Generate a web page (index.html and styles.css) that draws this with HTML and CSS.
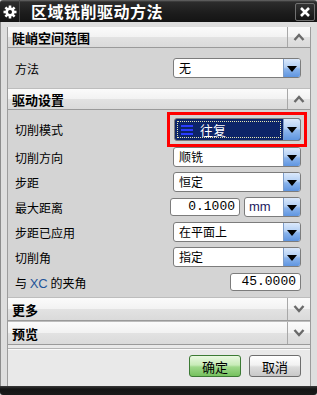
FILE: index.html
```html
<!DOCTYPE html>
<html lang="zh-CN">
<head>
    <meta charset="UTF-8">
    <title>区域铣削驱动方法</title>
    <link rel="stylesheet" href="styles.css">
</head>
<body>
<div class="dialog">
    <div class="titlebar">
        <span class="gear">
            <svg width="14" height="14" viewBox="0 0 14 14">
                <g fill="#fff" transform="translate(7 7)">
                    <rect x="-1.3" y="-6.5" width="2.6" height="13"/>
                    <rect x="-1.3" y="-6.5" width="2.6" height="13" transform="rotate(45)"/>
                    <rect x="-1.3" y="-6.5" width="2.6" height="13" transform="rotate(90)"/>
                    <rect x="-1.3" y="-6.5" width="2.6" height="13" transform="rotate(135)"/>
                    <circle r="4.6"/>
                </g>
                <circle cx="7" cy="7" r="2" fill="#1c1c1c"/>
            </svg>
        </span>
        <span class="title">区域铣削驱动方法</span>
        <span class="close">
            <svg width="12" height="12" viewBox="0 0 12 12">
                <path d="M2 2 L10 10 M10 2 L2 10" stroke="#fff" stroke-width="2.6"/>
            </svg>
        </span>
    </div>

    <div class="frame">
        <div class="panel">
            <div class="section-head first">
                <span class="head-text">陡峭空间范围</span>
                <span class="toggle">
                    <svg width="12" height="8" viewBox="0 0 12 8"><path d="M1.5 7 L6 2 L10.5 7" fill="none" stroke="#6a6a6a" stroke-width="2.4"/></svg>
                </span>
            </div>
            <div class="section-body pad">
                <div class="row">
                    <span class="label">方法</span>
                    <div class="combo">
                        <span class="value">无</span>
                        <span class="drop"><i class="tri"></i></span>
                    </div>
                </div>
            </div>

            <div class="section-head">
                <span class="head-text">驱动设置</span>
                <span class="toggle">
                    <svg width="12" height="8" viewBox="0 0 12 8"><path d="M1.5 7 L6 2 L10.5 7" fill="none" stroke="#6a6a6a" stroke-width="2.4"/></svg>
                </span>
            </div>
            <div class="section-body drive">
                <div class="row hl-row">
                    <span class="label">切削模式</span>
                    <div class="highlight">
                        <div class="combo focused">
                            <span class="value">
                                <span class="focus-box">
                                    <svg class="mode-icon" width="12" height="10" viewBox="0 0 12 10">
                                        <rect x="0" y="0" width="12" height="2" fill="#2a3cff"/>
                                        <rect x="0" y="4" width="12" height="2" fill="#2a3cff"/>
                                        <rect x="0" y="8" width="12" height="2" fill="#2a3cff"/>
                                    </svg>
                                    往复
                                </span>
                            </span>
                            <span class="drop"><i class="tri"></i></span>
                        </div>
                    </div>
                </div>
                <div class="row">
                    <span class="label">切削方向</span>
                    <div class="combo">
                        <span class="value">顺铣</span>
                        <span class="drop"><i class="tri"></i></span>
                    </div>
                </div>
                <div class="row">
                    <span class="label">步距</span>
                    <div class="combo">
                        <span class="value">恒定</span>
                        <span class="drop"><i class="tri"></i></span>
                    </div>
                </div>
                <div class="row">
                    <span class="label">最大距离</span>
                    <div class="pair">
                        <span class="num short">0.1000</span>
                        <div class="combo unit">
                            <span class="value mm">mm</span>
                            <span class="drop"><i class="tri"></i></span>
                        </div>
                    </div>
                </div>
                <div class="row">
                    <span class="label">步距已应用</span>
                    <div class="combo">
                        <span class="value">在平面上</span>
                        <span class="drop"><i class="tri"></i></span>
                    </div>
                </div>
                <div class="row">
                    <span class="label">切削角</span>
                    <div class="combo">
                        <span class="value">指定</span>
                        <span class="drop"><i class="tri"></i></span>
                    </div>
                </div>
                <div class="row">
                    <span class="label">与 <span class="xc">XC</span> 的夹角</span>
                    <span class="num angle">45.0000</span>
                </div>
            </div>

            <div class="section-head tall">
                <span class="head-text">更多</span>
                <span class="toggle">
                    <svg width="12" height="8" viewBox="0 0 12 8"><path d="M1.5 1 L6 6 L10.5 1" fill="none" stroke="#6a6a6a" stroke-width="2.4"/></svg>
                </span>
            </div>
            <div class="section-head tall">
                <span class="head-text">预览</span>
                <span class="toggle">
                    <svg width="12" height="8" viewBox="0 0 12 8"><path d="M1.5 1 L6 6 L10.5 1" fill="none" stroke="#6a6a6a" stroke-width="2.4"/></svg>
                </span>
            </div>

            <div class="footer">
                <div class="rule"></div>
                <div class="buttons">
                    <button class="btn ok">确定</button>
                    <button class="btn">取消</button>
                </div>
            </div>
        </div>
    </div>
    <div class="bottombar"></div>
</div>
</body>
</html>
```

FILE: styles.css
```css
body {
    margin: 0;
    font-family: "Noto Sans CJK SC", "Liberation Sans", sans-serif;
    font-size: 12px;
    color: #000;
    background: #d4d4d4;
}

.dialog {
    width: 317px;
    height: 395px;
    display: flex;
    flex-direction: column;
    overflow: hidden;
}

/* title bar */
.titlebar {
    height: 22px;
    flex: none;
    display: flex;
    align-items: center;
    background: linear-gradient(#6a6a6a 0, #2c2c2c 2px, #1c1c1c 60%, #141414 100%);
    border-radius: 3px 3px 0 0;
}

.gear {
    width: 20px;
    height: 22px;
    display: flex;
    align-items: center;
    justify-content: center;
    border-right: 1px solid #4a4a4a;
    box-sizing: border-box;
    padding-top: 2px;
}

.title {
    flex: 1;
    margin-left: 11px;
    color: #fff;
    font-weight: bold;
    font-size: 16px;
    letter-spacing: 0.5px;
    line-height: 22px;
}

.close {
    width: 18px;
    height: 16px;
    margin-right: 2px;
    margin-top: 1px;
    border: 1px solid #707070;
    border-radius: 2px;
    background: linear-gradient(#333, #141414);
    display: flex;
    align-items: center;
    justify-content: center;
}

/* frame */
.frame {
    flex: 1;
    display: flex;
    flex-direction: column;
    padding: 5px 6px 0 6px;
    background: #dedede;
    border-left: 1px solid #8c8c8c;
}

.panel {
    flex: 1;
    display: flex;
    flex-direction: column;
    border-left: 1px solid #9c9c9c;
    border-right: 1px solid #9c9c9c;
    background: #d4d4d4;
}

/* section headers */
.section-head {
    height: 20px;
    flex: none;
    display: flex;
    align-items: stretch;
    border-top: 1px solid #bdbdbd;
    border-bottom: 1px solid #9a9a9a;
    background: linear-gradient(#fbfbfb 0, #f2f2f2 50%, #e2e2e2 52%, #dadada 100%);
}

.section-head.first {
    border-top: none;
}

.section-head.tall {
    height: 22px;
}

.head-text {
    flex: 1;
    padding-left: 4px;
    font-weight: bold;
    font-size: 13px;
    display: flex;
    align-items: center;
}

.toggle {
    width: 22px;
    border-left: 1px solid #a8a8a8;
    display: flex;
    align-items: center;
    justify-content: center;
}

/* section bodies */
.section-body.pad {
    padding: 10px 0;
}

.section-body.drive {
    padding: 2px 0 5px 0;
}

.row {
    height: 20px;
    display: flex;
    align-items: center;
    justify-content: space-between;
    padding: 0 9px 0 7px;
}

.section-body.drive .row {
    margin-bottom: 5px;
}

.section-body.drive .row:last-child {
    margin-bottom: 0;
}

.section-body.drive .row.hl-row {
    height: 35px;
    margin-bottom: 0;
    padding-right: 3px;
}

.label {
    white-space: nowrap;
}

.xc {
    color: #1f5599;
    font-family: "Liberation Sans", sans-serif;
    font-size: 13px;
}

/* combo box */
.combo {
    width: 128px;
    height: 20px;
    box-sizing: border-box;
    display: flex;
    border: 1px solid #7c7c7c;
    border-radius: 3px;
    background: #fff;
    overflow: hidden;
}

.value {
    flex: 1;
    padding-left: 5px;
    line-height: 18px;
    font-size: 12px;
    white-space: nowrap;
}

.drop {
    width: 16px;
    display: flex;
    align-items: center;
    justify-content: center;
    background: linear-gradient(#dbe9fc 0, #b4d0f4 45%, #8ab4ec 55%, #5f95e0 100%);
    border-left: 1px solid #7d9cc8;
}

.tri {
    width: 0;
    height: 0;
    border-left: 5px solid transparent;
    border-right: 5px solid transparent;
    border-top: 6px solid #000;
    margin-top: 1px;
}

.highlight {
    border: 3px solid #ff0000;
    padding: 3px 3px 3px 4px;
}

.combo.focused {
    width: 127px;
    height: 23px;
    background: #0c2468;
}

.combo.focused .value {
    padding: 2px;
    line-height: normal;
    display: flex;
}

.focus-box {
    flex: 1;
    display: flex;
    align-items: center;
    color: #fff;
    font-size: 13px;
    border: 1px dotted #e8e8b0;
    padding-left: 3px;
}

.mode-icon {
    margin-right: 7px;
}

/* numeric inputs */
.pair {
    display: flex;
    gap: 4px;
    align-items: center;
}

.num {
    height: 18px;
    box-sizing: border-box;
    border: 1px solid #7c7c7c;
    border-radius: 3px;
    background: #fff;
    font-family: "Liberation Mono", monospace;
    font-size: 13px;
    line-height: 16px;
    text-align: right;
    padding-right: 4px;
}

.num.short {
    width: 70px;
}

.num.angle {
    width: 71px;
    margin-top: 0;
}

.combo.unit {
    width: 57px;
}

.value.mm {
    color: #1a1a60;
    font-family: "Liberation Sans", sans-serif;
    font-size: 13px;
    padding-left: 4px;
}

/* footer */
.footer {
    flex: 1;
    background: #e9e9e9;
    padding-top: 3px;
}

.rule {
    border-top: 1px solid #b4b4b4;
    border-bottom: 1px solid #fafafa;
}

.buttons {
    display: flex;
    justify-content: flex-end;
    gap: 8px;
    padding: 5px 9px 0 0;
}

.btn {
    width: 52px;
    height: 22px;
    box-sizing: border-box;
    border: 1px solid #6e6e6e;
    border-radius: 3px;
    background: linear-gradient(#ffffff 0, #f2f2f2 45%, #dcdcdc 55%, #c8c8c8 100%);
    font-family: "Noto Sans CJK SC", sans-serif;
    font-size: 13px;
    padding: 0;
    color: #000;
}

.btn.ok {
    border-color: #3c7a34;
    background: linear-gradient(#eaf8e2 0, #c8ecb8 45%, #9ed88a 55%, #76c25e 100%);
}

.bottombar {
    height: 9px;
    flex: none;
    background: linear-gradient(#3a3a3a, #141414 3px, #1a1a1a);
    border-radius: 0 0 3px 3px;
}
```
